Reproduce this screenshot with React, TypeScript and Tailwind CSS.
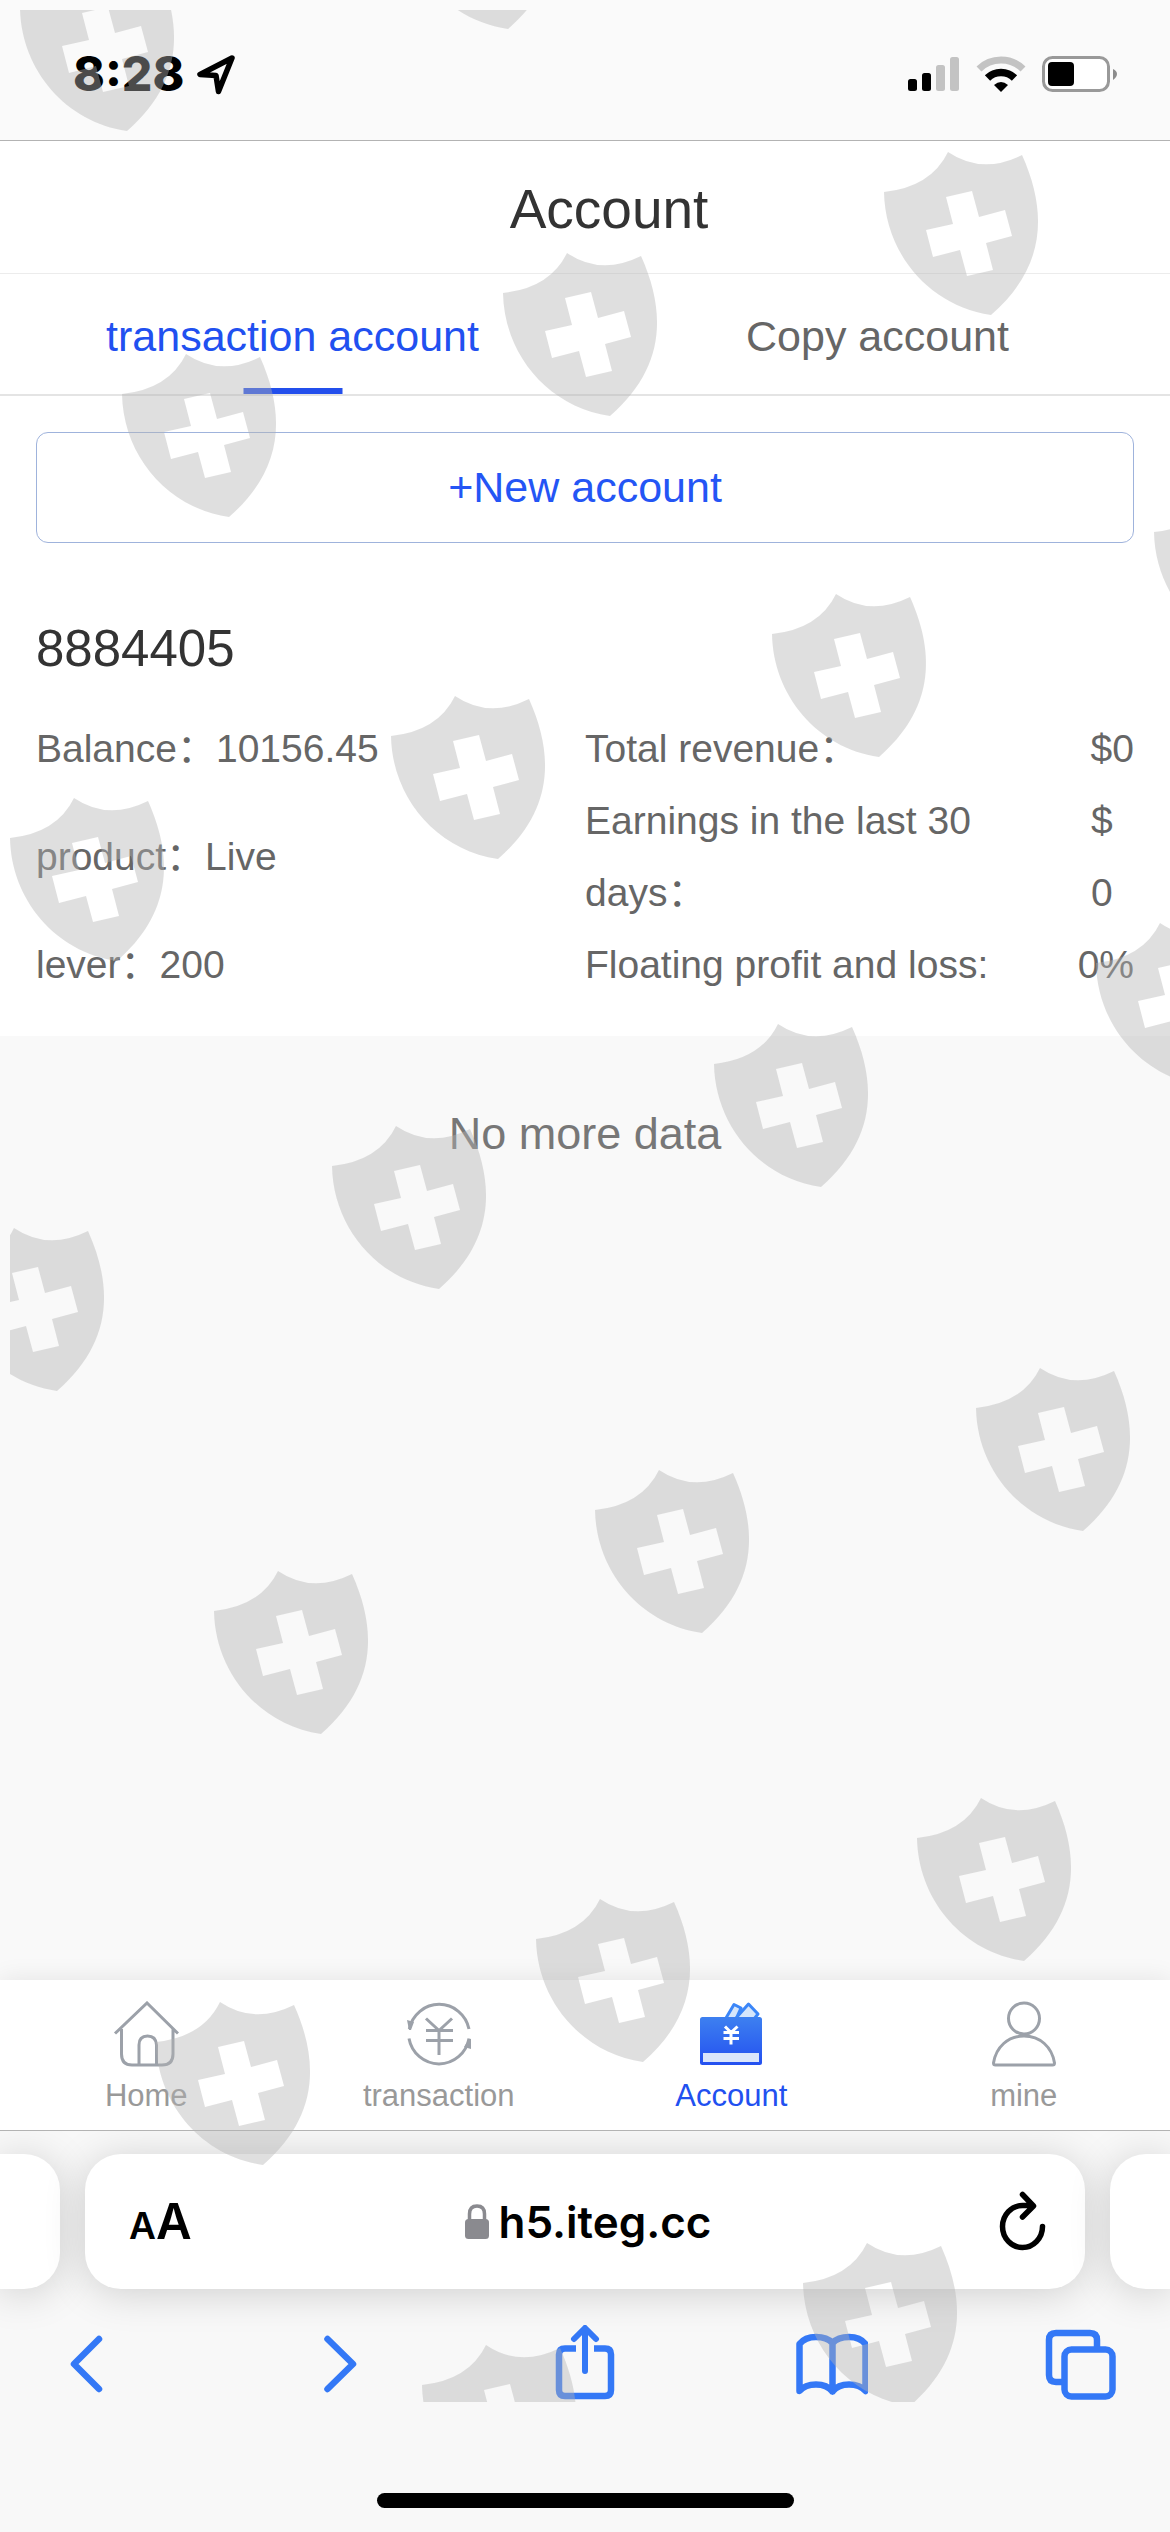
import type { ReactNode } from "react";

const SHIELDS: [number, number][] = [
  [20, 8], [401, -94],
  [884, 192], [503, 293], [122, 394],
  [1154, 532], [772, 634], [391, 736], [10, 838],
  [1096, 963], [714, 1064], [332, 1166], [-50, 1268],
  [976, 1408], [595, 1510], [214, 1611],
  [917, 1838], [536, 1939], [156, 2042],
  [803, 2283], [422, 2385],
];

function Watermark() {
  return (
    <div aria-hidden="true" className="pointer-events-none absolute top-[10px] right-0 left-[10px] z-20 h-[2392px] overflow-hidden">
      <svg width="1160" height="2392" viewBox="10 10 1160 2392" fill="#b2b2b2" fillOpacity="0.42">
        {SHIELDS.map(([x, y]) => (
          <path
            key={`${x},${y}`}
            transform={`translate(${x - 23} ${y - 61})`}
            fillRule="evenodd"
            d="M23 61Q70 56 87 21Q121 44 161 24C188 84 183 138 130 184C68 175 24 122 23 61ZM85 66L92 93L65 99L72 126L99 119L106 145L132 139L125 112L151 105L144 79L118 86L111 60Z"
          />
        ))}
      </svg>
    </div>
  );
}

function StatusBar() {
  return (
    <header className="flex h-[141px] items-center justify-between border-b border-[#b3b3b3] bg-[#fafafa] pt-2 pr-[52px] pl-[73px] font-['Inter',sans-serif]">
      <div className="flex items-center gap-3">
        <span className="text-[48px] leading-none font-extrabold text-black">8:28</span>
        <svg width="40" height="42" viewBox="0 0 40 42" fill="none" stroke="#000" strokeWidth="5.500" strokeLinejoin="round" strokeLinecap="round">
          <path d="M36 5L4 21.500L20 22.500L22.500 38.500Z" />
        </svg>
      </div>
      <div className="flex items-center gap-4">
        <svg width="52" height="36" viewBox="0 0 52 36">
          <rect x="0" y="23" width="9" height="12" rx="2.500" />
          <rect x="14" y="17" width="9" height="18" rx="2.500" />
          <rect x="28" y="9" width="9" height="26" rx="2.500" fill="#c3c3c3" />
          <rect x="42" y="1" width="9" height="34" rx="2.500" fill="#c3c3c3" />
        </svg>
        <svg width="50" height="36" viewBox="0 0 50 36" fill="none" strokeWidth="7">
          <path d="M3 13Q12 4 25 4T47 13" stroke="#c3c3c3" />
          <path d="M11.500 22Q17 16.500 25 16.500T38.500 22" stroke="#000" strokeWidth="7.500" />
          <path d="M25 36L18 29Q25 23 32 29Z" fill="#000" />
        </svg>
        <svg width="76" height="38" viewBox="0 0 76 38">
          <rect x="1.500" y="2.500" width="65" height="33" rx="9" fill="#fff" stroke="#999" strokeWidth="3" />
          <rect x="6" y="7" width="26" height="24" rx="4" />
          <path d="M71 14Q75 16 75 19T71 25Z" fill="#8c8c8c" />
        </svg>
      </div>
    </header>
  );
}

function Tab({ label, active }: { label: string; active?: boolean }) {
  return (
    <button
      type="button"
      role="tab"
      aria-selected={!!active}
      className={`relative flex h-[120px] items-center justify-center pt-1 text-[43px] ${active ? "text-[#2150f0]" : "text-[#666]"}`}
    >
      {label}
      {active && <span className="absolute bottom-0 left-1/2 h-[6px] w-[99px] -translate-x-1/2 bg-[#234fec]" />}
    </button>
  );
}

function Detail({ label, value, spread }: { label: string; value: string; spread?: boolean }) {
  return (
    <div className={spread ? "flex justify-between" : "flex"}>
      <dt>{label}</dt>
      <dd>{value}</dd>
    </div>
  );
}

function NavItem({ label, active, children }: { label: string; active?: boolean; children: ReactNode }) {
  return (
    <a
      href="#"
      aria-current={active ? "page" : undefined}
      className={`flex flex-col items-center pt-[21px] text-[31px] ${active ? "text-[#2150f0]" : "text-[#999]"}`}
    >
      <svg width="66" height="67" viewBox="0 0 66 67" fill="none" stroke="#9ca1a9" strokeWidth="3">
        {children}
      </svg>
      <span className="mt-2 leading-10">{label}</span>
    </a>
  );
}

function ToolButton({ label, children }: { label: string; children: ReactNode }) {
  return (
    <button type="button" aria-label={label}>
      <svg width="72" height="78" viewBox="0 0 72 78" fill="none" stroke="#3478f6" strokeWidth="6.500" strokeLinecap="round" strokeLinejoin="round">
        {children}
      </svg>
    </button>
  );
}

export default function App() {
  return (
    <div className="relative flex min-h-screen flex-col overflow-hidden bg-[#f9f9f9] font-['Liberation_Sans','Noto_Sans_CJK_SC',sans-serif]">
      <StatusBar />
      <div className="flex h-[133px] items-center justify-center border-b border-[#ececec] bg-white pt-1 pl-12">
        <h1 className="text-[55px] text-[#333]">Account</h1>
      </div>
      <div role="tablist" className="grid grid-cols-2 border-b-2 border-[#e4e4e4] bg-white">
        <Tab label="transaction account" active />
        <Tab label="Copy account" />
      </div>

      <main className="flex-1">
        <section className="bg-white px-9 pt-9 pb-[35px]">
          <button type="button" className="h-[111px] w-full rounded-xl border border-[#9fb3dc] bg-white text-[43px] text-[#2455f5]">
            +New account
          </button>
          <h2 className="mt-[70px] text-[51px] leading-[72px] text-[#333]">8884405</h2>
          <div className="mt-7 grid grid-cols-2 text-[39px] leading-[72px] text-[#666]">
            <dl className="flex flex-col justify-between">
              <Detail label="Balance：" value="10156.45" />
              <Detail label="product：" value="Live" />
              <Detail label="lever：" value="200" />
            </dl>
            <dl>
              <Detail label="Total revenue：" value="$0" spread />
              <div className="flex justify-between">
                <dt className="max-w-[440px]">Earnings in the last 30 days：</dt>
                <dd className="w-[43px]">$ 0</dd>
              </div>
              <Detail label="Floating profit and loss:" value="0%" spread />
            </dl>
          </div>
        </section>
        <p className="pt-[62px] text-center text-[45px] leading-[72px] text-[#777]">No more data</p>
      </main>

      <nav className="grid h-[150px] grid-cols-4 bg-white shadow-[0_0_24px_rgba(0,0,0,0.09)]">
        <NavItem label="Home">
          <path d="M2 32.500L34 2L65 32.500M8.500 28V53Q8.500 64 19 64H49Q60 64 60 53V28M26 64V44Q26 35 34.500 35T43.500 44V64" />
        </NavItem>
        <NavItem label="transaction">
          <path d="M3.300 28A30.500 31 0 0 1 63 28M3 37.500A30.500 31 0 0 0 63 37.500M20 17.500L33 29.500L46 17.500M33 29.500V54M20 29.500H47M20 39.500H47" />
          <path d="M1 19L3 29H5L8 21ZM58 46L63 38H65V48Z" fill="#9ca1a9" stroke="none" />
        </NavItem>
        <NavItem label="Account" active>
          <defs>
            <linearGradient id="wallet" x1="0" y1="0" x2="0" y2="1">
              <stop offset="0" stopColor="#3d80f0" />
              <stop offset="1" stopColor="#2450f0" />
            </linearGradient>
          </defs>
          <path d="M28 17L36 3.500L43 7L38 18M38 17L50.500 3L60 13L56 18" fill="#d6e6fb" stroke="#3b86f8" strokeWidth="3" strokeLinejoin="round" />
          <rect x="2" y="16" width="62" height="48" rx="2.500" fill="url(#wallet)" stroke="none" />
          <rect x="5" y="52" width="56" height="9" fill="#dbe6fb" stroke="none" />
          <path d="M27 25.500L33 31.500L39.500 25.500M33 31.500V43.500M25.500 31.500H41M25.500 37.500H41" stroke="#fff" strokeWidth="3" />
        </NavItem>
        <NavItem label="mine">
          <circle cx="33" cy="17.500" r="15.500" />
          <path d="M2.500 62C5 46 17 35 33 35S61 46 63.500 62Q63.500 64 61.500 64H4.500Q2.500 64 2.500 62Z" />
        </NavItem>
      </nav>

      <footer className="z-10 overflow-hidden border-t border-[#b3b3b3] bg-[#f8f8f8] pt-[23px] pb-6 font-['Inter',sans-serif]">
        <div className="flex gap-[25px]">
          <div className="w-[60px] rounded-r-[36px] bg-white shadow-[0_4px_40px_rgba(0,0,0,0.17)]" />
          <div className="grid h-[135px] flex-1 grid-cols-[1fr_auto_1fr] items-center rounded-[36px] bg-white pr-[38px] pl-[44px] shadow-[0_4px_40px_rgba(0,0,0,0.17)]">
            <button type="button" aria-label="Page settings" className="flex items-baseline justify-self-start font-semibold text-black">
              <span className="text-[37px] leading-none">A</span>
              <span className="text-[49px] leading-none">A</span>
            </button>
            <button type="button" className="flex items-center gap-2 text-[44px] font-semibold text-black">
              <svg width="26" height="36" viewBox="0 0 26 36" fill="#8a8a8f">
                <rect x="1" y="15" width="24" height="20" rx="3.500" />
                <path d="M5.500 17V10Q5.500 2 13 2T20.500 10V17" fill="none" stroke="#8a8a8f" strokeWidth="3.500" />
              </svg>
              h5.iteg.cc
            </button>
            <button type="button" aria-label="Reload" className="justify-self-end">
              <svg width="48" height="66" viewBox="0 0 48 66" fill="none" stroke="#000" strokeWidth="5.500" strokeLinecap="round" strokeLinejoin="round">
                <path d="M43.500 37.500A20 21 0 1 1 23.500 16.500H34M23.500 5.500L34.500 17L23.500 28" />
              </svg>
            </button>
          </div>
          <div className="w-[60px] rounded-l-[36px] bg-white shadow-[0_4px_40px_rgba(0,0,0,0.17)]" />
        </div>
        <div className="mt-9 flex justify-between pr-[53px] pl-[49px]">
          <ToolButton label="Back">
            <path d="M50 14L25 39L50 64" />
          </ToolButton>
          <ToolButton label="Forward">
            <path d="M29.500 14L55 39L29.500 64" />
          </ToolButton>
          <ToolButton label="Share">
            <path d="M38 46V4M27 14L38 3L49 14" strokeWidth="6" />
            <path d="M29 23.500H18Q12 23.500 12 29.500V65Q12 71 18 71H58Q64 71 64 65V29.500Q64 23.500 58 23.500H47" strokeLinecap="butt" />
          </ToolButton>
          <ToolButton label="Bookmarks">
            <path d="M36.500 18Q31 12 20 12Q9 12 3.500 19V66Q9 59.500 20 59.500Q31 59.500 36.500 66.500Q42 59.500 53 59.500Q64 59.500 69.500 66V19Q64 12 53 12Q42 12 36.500 18V66.500" />
          </ToolButton>
          <ToolButton label="Tabs">
            <path d="M19 57H11Q4 57 4 50V15Q4 8 11 8H45Q52 8 52 15V24" strokeLinecap="butt" />
            <rect x="19.500" y="24.500" width="48" height="47" rx="7" />
          </ToolButton>
        </div>
        <div className="mx-auto mt-[90px] h-[15px] w-[417px] rounded-full bg-black" />
      </footer>
      <Watermark />
    </div>
  );
}
